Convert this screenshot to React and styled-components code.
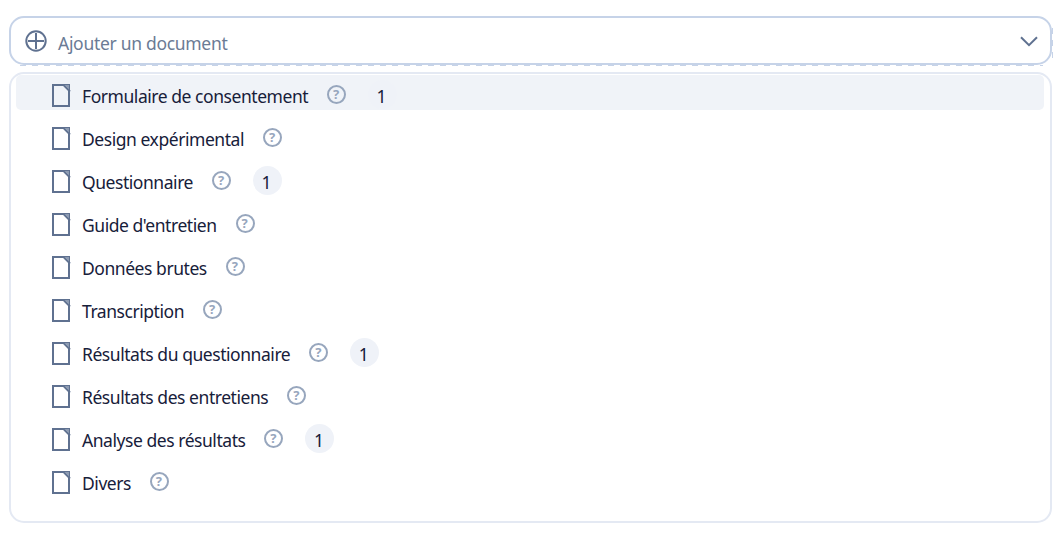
import React from 'react'
import styled, { createGlobalStyle } from "styled-components";

const documents = [
    { label: "Formulaire de consentement", count: 1, active: true },
    { label: "Design expérimental" },
    { label: "Questionnaire", count: 1 },
    { label: "Guide d'entretien" },
    { label: "Données brutes" },
    { label: "Transcription" },
    { label: "Résultats du questionnaire", count: 1 },
    { label: "Résultats des entretiens" },
    { label: "Analyse des résultats", count: 1 },
    { label: "Divers" },
]

const App = () => {
    return (
        <Page>
            <GlobalStyle />
            <Trigger>
                <PlusIcon viewBox="0 0 22 22">
                    <circle cx="11" cy="11" r="9.7" />
                    <path d="M11 3v16M3 11h16" />
                </PlusIcon>
                <Placeholder>Ajouter un document</Placeholder>
                <ChevronIcon viewBox="0 0 18 11">
                    <path d="M1 1.2l8 8 8-8" />
                </ChevronIcon>
            </Trigger>

            <Menu>
                {documents.map((doc) => (
                    <Item key={doc.label} $active={doc.active}>
                        <FileIcon viewBox="0 0 19 23">
                            <path d="M1 1h16v21H1z" />
                            <path d="M12 1.5l6 6" />
                            <path d="M12.5 1H17v4.5z" />
                        </FileIcon>
                        <Label>{doc.label}</Label>
                        <Help>?</Help>
                        {doc.count && <Badge>{doc.count}</Badge>}
                    </Item>
                ))}
            </Menu>
        </Page>
    )
}

const GlobalStyle = createGlobalStyle`
body{
  margin:0;
  background:#ffffff;
  font-family:"Noto Sans", "Open Sans", sans-serif;
}

*{
  box-sizing:border-box;
}
`

const Page = styled.div`
width:1060px;
height:540px;
padding:16px 7px 0 9px;
`

const Trigger = styled.div`
position:relative;
display:flex;
align-items:center;
width:1043px;
height:49px;
padding:0 12px 0 14px;
border:2px solid #c6d3e8;
border-radius:15px;

/* dashed edge under and to the right of the field */
&::after{
  content:"";
  position:absolute;
  inset:-2px -3px -3px -2px;
  pointer-events:none;
  background:
    repeating-linear-gradient(90deg, #c6d3e8 0 6px, transparent 6px 12px) 11px 100% / 1023px 1px no-repeat,
    repeating-linear-gradient(180deg, #c6d3e8 0 6px, transparent 6px 12px) 100% 12px / 1px 30px no-repeat;
}
`

const PlusIcon = styled.svg`
width:22px;
height:22px;
fill:none;
stroke:#5f7190;
stroke-width:2;
`

const Placeholder = styled.span`
flex:1;
margin:4px 0 0 11px;
font-size:17.5px;
line-height:24px;
letter-spacing:-0.3px;
color:#6b7b95;
`

const ChevronIcon = styled.svg`
width:18px;
height:11px;
margin-top:1px;
fill:none;
stroke:#5f7190;
stroke-width:2;
`

const Menu = styled.ul`
display:flex;
flex-direction:column;
gap:8px;
width:1043px;
height:451px;
margin:7px 0 0;
padding:1px 6px 0 5px;
list-style:none;
border:2px solid #e4e9f3;
border-radius:15px;
`

const Item = styled.li`
display:flex;
align-items:center;
height:35px;
padding-left:36px;
border-radius:5px;
background:${({ $active }) => ($active ? "#f0f3f8" : "transparent")};
`

const FileIcon = styled.svg`
width:19px;
height:23px;
margin-top:6px;
fill:none;
stroke:#5f7190;
stroke-width:2;

path:last-child{
  fill:#8d9bb2;
  stroke:none;
}
`

const Label = styled.span`
margin:6px 0 0 11px;
font-size:17.5px;
line-height:24px;
letter-spacing:-0.45px;
color:#17203a;
white-space:nowrap;
`

const Help = styled.span`
display:flex;
align-items:center;
justify-content:center;
width:19px;
height:19px;
margin:4px 0 0 19px;
padding-right:1px;
border:2px solid #97a6bd;
border-radius:50%;
font-size:13px;
font-weight:700;
line-height:15px;
color:#97a6bd;
`

const Badge = styled.span`
display:flex;
align-items:center;
justify-content:center;
width:29px;
height:29px;
margin:4px 0 0 22px;
padding:3px 2px 0 0;
border-radius:50%;
font-size:17.5px;
line-height:24px;
color:#17203a;
background:#eff2f8;
`

export default App
